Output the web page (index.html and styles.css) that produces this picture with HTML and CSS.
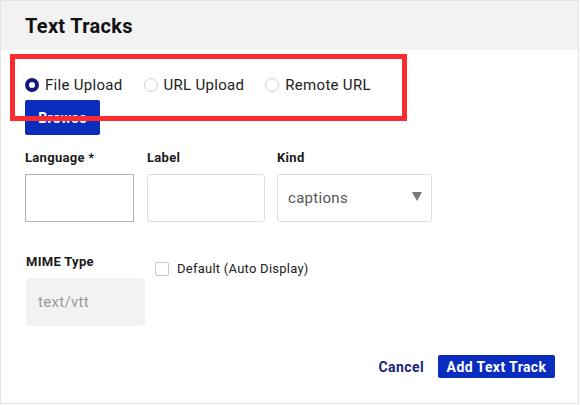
FILE: index.html
```html
<!DOCTYPE html>
<html>
<head>
<meta charset="utf-8">
<link rel="stylesheet" href="styles.css">
</head>
<body>
<div class="modal">
  <div class="header"><h1 class="title">Text Tracks</h1></div>
  <div class="content">
    <div class="radios">
      <label class="radio-item"><span class="radio checked"></span><span class="radio-text">File Upload</span></label>
      <label class="radio-item"><span class="radio"></span><span class="radio-text">URL Upload</span></label>
      <label class="radio-item"><span class="radio"></span><span class="radio-text">Remote URL</span></label>
    </div>
    <button class="btn browse">Browse</button>
    <div class="fields">
      <div class="field f-lang">
        <div class="field-label">Language *</div>
        <div class="input square"></div>
      </div>
      <div class="field f-label">
        <div class="field-label">Label</div>
        <div class="input rounded shifted"></div>
      </div>
      <div class="field f-kind">
        <div class="field-label">Kind</div>
        <div class="input rounded select">
          <span class="select-text">captions</span>
          <svg class="caret" width="10" height="9" viewBox="0 0 10 9"><polygon points="0,0 10,0 5,9" fill="#777"/></svg>
        </div>
      </div>
    </div>
    <div class="row2">
      <div class="field f-mime">
        <div class="field-label">MIME Type</div>
        <div class="input disabled"><span class="mime-text">text/vtt</span></div>
      </div>
      <label class="check-item"><span class="checkbox"></span><span class="check-text">Default (Auto Display)</span></label>
    </div>
    <div class="footer">
      <a class="cancel">Cancel</a>
      <button class="btn add">Add Text Track</button>
    </div>
  </div>
  <div class="highlight"></div>
</div>
</body>
</html>
```

FILE: styles.css
```css
* { box-sizing: border-box; }
html, body { margin: 0; padding: 0; background: #fff; }
body { font-family: Roboto, "Liberation Sans", sans-serif; color: #1f1f1f; }

.modal {
  position: relative;
  width: 579px;
  height: 404px;
  border: 1px solid #e3e3e3;
  background: #fff;
}

.header {
  height: 49px;
  background: #f2f2f2;
  padding: 13px 0 0 24px;
}
.title {
  margin: 0;
  font-size: 20px;
  line-height: 24px;
  font-weight: 700;
  letter-spacing: 0.3px;
  color: #111;
}

.content { padding: 25px 0 0 24px; }

.radios {
  display: flex;
  align-items: center;
  height: 20px;
  gap: 21px;
}
.radio-item { display: flex; align-items: center; gap: 6px; }
.radio {
  width: 14px; height: 14px;
  border-radius: 50%;
  border: 1px solid #cfcfcf;
  background: #fff;
}
.radio.checked {
  border: 4px solid #15177f;
  background: #fff;
}
.radio-text { font-size: 15px; line-height: 20px; letter-spacing: 0.3px; color: #222; }

.btn {
  border: none;
  font-family: inherit;
  font-weight: 700;
  color: #fff;
  background: #0a2dbe;
  border-radius: 2px;
  padding: 0;
}
.browse {
  display: block;
  margin-top: 5px;
  width: 75px;
  height: 35px;
  font-size: 14px;
  letter-spacing: 0.3px;
}

.fields {
  display: grid;
  grid-template-columns: 109px 119px 155px;
  column-gap: 12px;
  margin-top: 15px;
}
.f-label { margin-left: 1px; }
.field-label {
  font-size: 13px;
  line-height: 16px;
  font-weight: 700;
  letter-spacing: 0.3px;
  color: #1a1a1a;
  margin-bottom: 8px;
}
.input { height: 48px; background: #fff; }
.input.square { border: 1px solid #b5b5b5; }
.input.rounded { border: 1px solid #dedede; border-radius: 3px; }
.input.shifted { margin-top: 1px; }
.select {
  display: flex;
  align-items: center;
  justify-content: space-between;
  padding: 0 9px 0 10px;
}
.select-text { font-size: 15px; letter-spacing: 0.3px; color: #555; }
.caret { margin-top: -4px; }

.row2 { display: flex; margin-top: 32px; }
.f-mime { width: 119px; margin-left: 1px; }
.input.disabled {
  background: #f2f2f2;
  border-radius: 4px;
  display: flex;
  align-items: center;
  padding-left: 12px;
}
.mime-text { font-size: 15px; letter-spacing: 0.3px; color: #9a9a9a; }

.check-item {
  display: flex;
  align-items: center;
  gap: 8px;
  margin: 7px 0 0 10px;
  height: 16px;
}
.checkbox {
  width: 14px; height: 14px;
  border: 1px solid #c8c8c8;
  border-radius: 2px;
  background: #fff;
}
.check-text { font-size: 13px; line-height: 16px; letter-spacing: 0.25px; color: #222; }

.footer {
  display: flex;
  justify-content: flex-end;
  align-items: center;
  gap: 14px;
  margin-top: 29px;
  padding-right: 23px;
}
.cancel { font-size: 14px; font-weight: 700; letter-spacing: 0.4px; color: #1a1f7c; }
.add { width: 117px; height: 23px; font-size: 14px; letter-spacing: 0.4px; }

.highlight {
  position: absolute;
  left: 9px;
  top: 53px;
  width: 397px;
  height: 67px;
  border: 5px solid #fe2b2e;
  pointer-events: none;
}
```
